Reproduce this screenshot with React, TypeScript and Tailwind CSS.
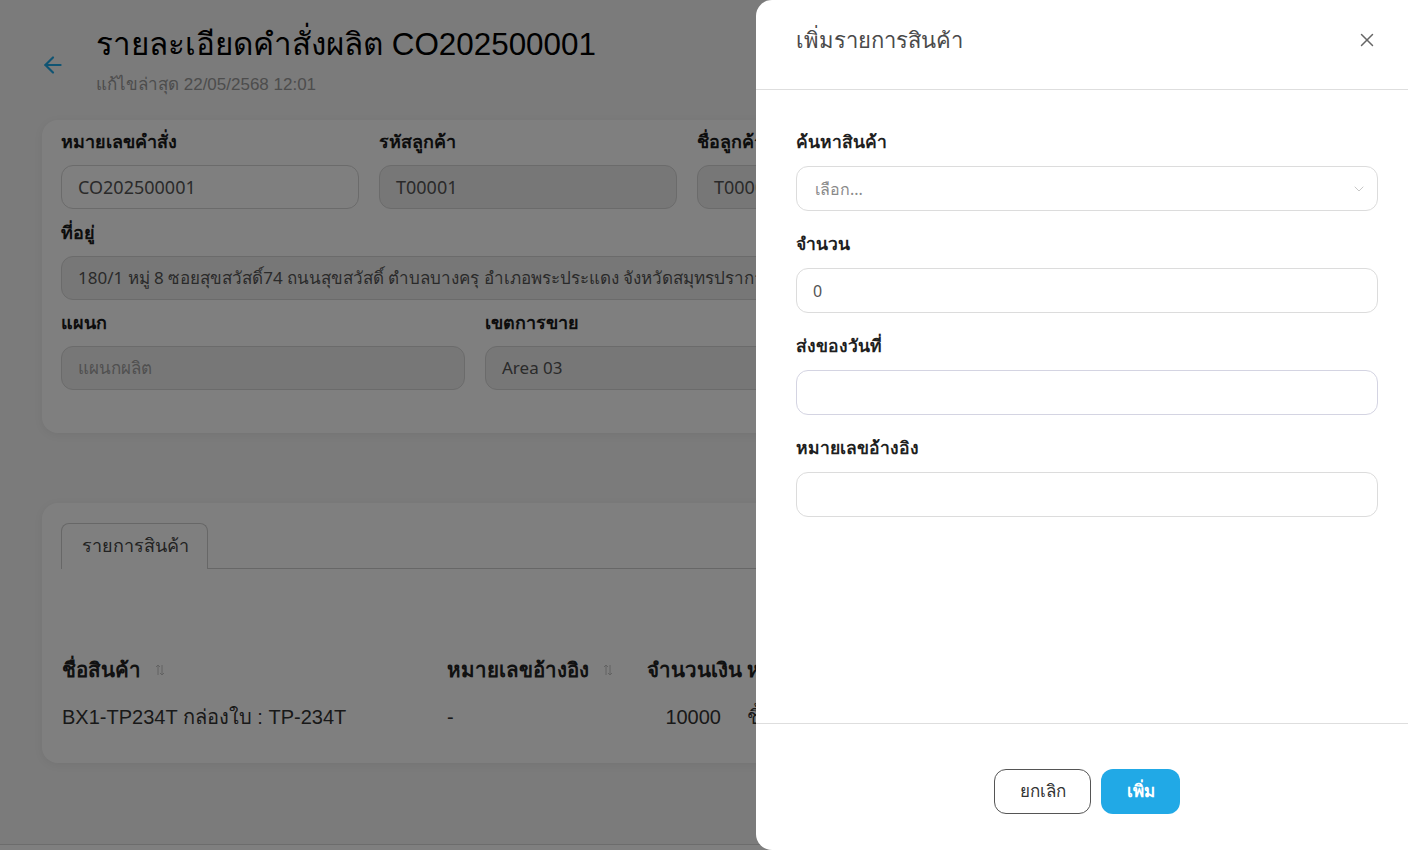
import { ArrowLeft, X, ChevronDown } from 'lucide-react';

const SORT = (
  <svg width="10" height="12" viewBox="0 0 10 12" className="text-[#c4c4c4]">
    <path d="M3 11V1M3 1L1 3M3 1l2 2" stroke="currentColor" strokeWidth="1" fill="none" />
    <path d="M7 1v10M7 11l-2-2M7 11l2-2" stroke="currentColor" strokeWidth="1" fill="none" />
  </svg>
);

function PageField({
  label,
  value,
  disabled,
  placeholder,
  small,
}: {
  label: string;
  value?: string;
  disabled?: boolean;
  placeholder?: boolean;
  small?: boolean;
}) {
  return (
    <div className="flex flex-col">
      <p className="text-[18px] leading-6 font-bold text-[#1a1a1a] mb-[11px]">{label}</p>
      <div
        className={`h-[44px] rounded-xl border border-[#d6d6d6] px-4 flex items-center whitespace-nowrap overflow-hidden font-['Noto_Sans',sans-serif] ${
          small ? 'text-[17px]' : 'text-[18px]'
        } ${disabled ? 'bg-[#efefef]' : 'bg-white'} ${placeholder ? 'text-[#a0a0a0]' : 'text-[#555]'}`}
      >
        {value}
      </div>
    </div>
  );
}

function DrawerField({
  label,
  children,
  className = '',
  first,
}: {
  label: string;
  children?: React.ReactNode;
  className?: string;
  first?: boolean;
}) {
  return (
    <div className={first ? '' : 'mt-[21px]'}>
      <p className="text-[17.5px] leading-6 font-bold text-[#1f1f1f] mb-3">{label}</p>
      <div
        className={`h-[45px] rounded-xl border bg-white px-4 flex items-center text-[16px] ${className}`}
      >
        {children}
      </div>
    </div>
  );
}

export default function App() {
  return (
    <div className="relative h-[850px] w-full overflow-hidden bg-[#f6f6f6] font-['Liberation_Sans',Arial,sans-serif]">
      {/* Underlying page */}
      <div className="flex items-start pl-[40px] pt-[26px]">
        <ArrowLeft className="w-[26px] h-[26px] mt-[26px] text-[#21a9e6]" strokeWidth={2} />
        <div className="ml-[30px]">
          <h1 className="text-[31.4px] leading-[38px] text-black">รายละเอียดคำสั่งผลิต CO202500001</h1>
          <p className="text-[17px] leading-6 text-[#9a9a9a] mt-[9px]">แก้ไขล่าสุด 22/05/2568 12:01</p>
        </div>
      </div>

      <div className="mx-[42px] mt-[23px] w-[1290px] rounded-2xl bg-white shadow-[0_2px_10px_rgba(0,0,0,0.06)] px-[19px] pt-[10px] pb-[43px]">
        <div className="grid grid-cols-4 gap-x-5">
          <PageField label="หมายเลขคำสั่ง" value="CO202500001" />
          <PageField label="รหัสลูกค้า" value="T00001" disabled />
          <PageField label="ชื่อลูกค้า" value="T00001 บริษัท ทดสอบ จำกัด" disabled />
          <PageField label="เบอร์โทร" value="02-000-0000" disabled />
        </div>
        <div className="mt-3">
          <PageField
            label="ที่อยู่"
            value="180/1 หมู่ 8 ซอยสุขสวัสดิ์74 ถนนสุขสวัสดิ์ ตำบลบางครุ อำเภอพระประแดง จังหวัดสมุทรปราการ 10130"
            disabled
            small
          />
        </div>
        <div className="grid grid-cols-3 gap-x-5 mt-[11px]">
          <PageField label="แผนก" value="แผนกผลิต" disabled placeholder small />
          <PageField label="เขตการขาย" value="Area 03" disabled small />
          <PageField label="พนักงานขาย" value="-" disabled small />
        </div>
      </div>

      <div className="mx-[42px] mt-[70px] w-[1290px] h-[260px] rounded-2xl bg-white shadow-[0_2px_10px_rgba(0,0,0,0.06)] px-[19px] pt-[20px]">
        <div className="flex items-end">
          <div className="w-[147px] h-[46px] rounded-t-lg border border-b-0 border-[#cfcfcf] flex items-center pl-[20px] text-[18px] text-[#444]">
            รายการสินค้า
          </div>
          <div className="flex-1 border-b border-[#cfcfcf]" />
        </div>
        <div className="flex items-center mt-[87px] h-7 text-[20.5px] font-bold text-[#222]">
          <div className="w-[386px] flex items-center gap-[14px] pl-px">
            ชื่อสินค้า {SORT}
          </div>
          <div className="w-[200px] flex items-center gap-[14px]">
            หมายเลขอ้างอิง {SORT}
          </div>
          <div className="w-[100px] whitespace-nowrap">จำนวนเงิน</div>
          <div className="w-[120px]">หน่วย</div>
          <div>วันที่ส่งของ</div>
        </div>
        <div className="flex items-center mt-[19px] h-7 text-[20px] text-[#333]">
          <div className="w-[386px] pl-px">BX1-TP234T กล่องใบ : TP-234T</div>
          <div className="w-[200px]">-</div>
          <div className="w-[100px] text-right pr-[26px]">10000</div>
          <div className="w-[120px]">ชิ้น</div>
          <div>-</div>
        </div>
      </div>

      <div className="absolute left-0 right-0 top-[844px] h-[6px] border-t border-[#d8d8d8] bg-white" />

      {/* Overlay */}
      <div className="absolute inset-0 bg-black/50" />

      {/* Drawer */}
      <div className="absolute top-0 right-0 h-full w-[652px] bg-white rounded-l-2xl flex flex-col">
        <div className="h-[90px] border-b border-[#dedede] pl-10 pr-[30px] pt-[20px]">
          <div className="flex items-center justify-between h-[40px]">
            <h2 className="text-[22px] text-[#4a4a4a]">เพิ่มรายการสินค้า</h2>
            <X className="w-[22px] h-[22px] text-[#666]" strokeWidth={1.6} />
          </div>
        </div>

        <div className="flex-1 pl-10 pr-[30px] pt-[40px]">
          <DrawerField label="ค้นหาสินค้า" first className="border-[#dcdcdc] justify-between pl-[18px] pr-[10px]">
            <span className="leading-6 text-[#8a8a8a] font-['Noto_Sans',sans-serif]">เลือก...</span>
            <ChevronDown className="w-4 h-4 text-[#c8c8c8]" strokeWidth={1.5} />
          </DrawerField>
          <DrawerField label="จำนวน" className="border-[#dcdcdc]">
            <span className="leading-6 text-[#555] font-['Noto_Sans',sans-serif]">0</span>
          </DrawerField>
          <DrawerField label="ส่งของวันที่" className="border-[#d4d4e2]" />
          <DrawerField label="หมายเลขอ้างอิง" className="border-[#dcdcdc]" />
        </div>

        <div className="h-[127px] border-t border-[#dedede] flex justify-center gap-[10px] pt-[45px] pl-[10px]">
          <button className="h-[45px] w-[97px] rounded-xl border border-[#555] bg-white text-[17px] text-[#333]">
            ยกเลิก
          </button>
          <button className="h-[45px] w-[79px] rounded-xl bg-[#21a9e6] text-[17px] font-bold text-white">
            เพิ่ม
          </button>
        </div>
      </div>
    </div>
  );
}
